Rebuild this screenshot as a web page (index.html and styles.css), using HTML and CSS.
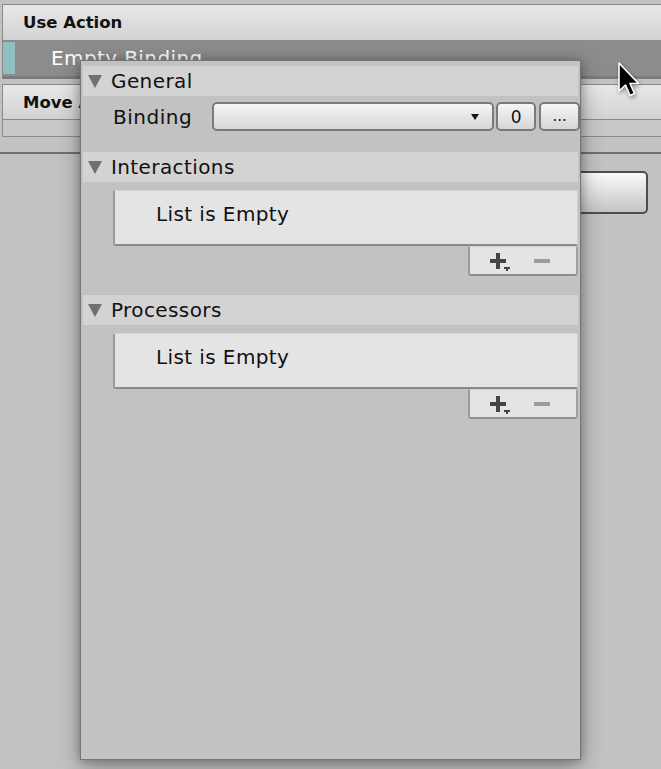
FILE: index.html
```html
<!DOCTYPE html>
<html>
<head>
<meta charset="utf-8">
<link rel="stylesheet" href="styles.css">
</head>
<body>
<div class="bg">
  <div class="alist first">
    <div class="ahead">Use Action</div>
    <div class="arow selected"><span class="strip"></span><span class="rowtext">Empty Binding</span></div>
  </div>
  <div class="alist second">
    <div class="ahead">Move Action</div>
    <div class="arow small"></div>
  </div>
  <div class="rule"></div>
  <div class="btnrow"><div class="bigbtn"></div></div>
</div>

<div class="popup">
  <div class="sect">
    <span class="tri"></span><span class="stitle">General</span>
  </div>
  <div class="binding">
    <span class="blabel">Binding</span>
    <div class="dropdown"><span class="darrow"></span></div>
    <div class="sbtn zero">0</div>
    <div class="sbtn dots">...</div>
  </div>

  <div class="sect s2">
    <span class="tri"></span><span class="stitle">Interactions</span>
  </div>
  <div class="listbox">List is Empty</div>
  <div class="footer-wrap">
    <div class="footer">
      <svg class="plus" width="22" height="20" viewBox="0 0 22 20"><rect x="0" y="6" width="16" height="4" fill="#444"/><rect x="6" y="0" width="4" height="16" fill="#444"/><rect x="14" y="14" width="6" height="2" fill="#444"/><rect x="16" y="16" width="2" height="2" fill="#444"/></svg>
      <span class="minus"></span>
    </div>
  </div>

  <div class="sect s3">
    <span class="tri"></span><span class="stitle">Processors</span>
  </div>
  <div class="listbox">List is Empty</div>
  <div class="footer-wrap">
    <div class="footer">
      <svg class="plus" width="22" height="20" viewBox="0 0 22 20"><rect x="0" y="6" width="16" height="4" fill="#444"/><rect x="6" y="0" width="4" height="16" fill="#444"/><rect x="14" y="14" width="6" height="2" fill="#444"/><rect x="16" y="16" width="2" height="2" fill="#444"/></svg>
      <span class="minus"></span>
    </div>
  </div>
</div>

<svg class="cursor" width="26" height="38" viewBox="0 0 26 38">
  <path d="M2 1 L2 29 L8.5 23 L13 33.5 L17.5 31.5 L13 21.5 L21.5 21.5 Z" fill="#000" stroke="#fff" stroke-width="1.6" stroke-linejoin="round"/>
</svg>
</body>
</html>
```

FILE: styles.css
```css
html, body {
  margin: 0;
  padding: 0;
}
body {
  background: #c2c2c2;
  width: 661px;
  height: 769px;
  overflow: hidden;
  font-family: "DejaVu Sans", "Liberation Sans", sans-serif;
  color: #111;
  position: relative;
}
.bg {
  padding-top: 4px;
}
.alist {
  margin-left: 2px;
  border-top: 1px solid #8a8a8a;
  border-left: 1px solid #8a8a8a;
}
.first {
  border-bottom: 3px solid #7c7c7c;
}
.second {
  margin-top: 5px;
  border-bottom: 1px solid #8a8a8a;
}
.ahead {
  height: 35px;
  box-sizing: border-box;
  padding-left: 20px;
  display: flex;
  align-items: center;
  font-weight: bold;
  font-size: 16.5px;
  background: linear-gradient(#e8e8e8, #d2d2d2);
}
.second .ahead {
  border-bottom: 1px solid #8a8a8a;
}
.arow {
  height: 36px;
  display: flex;
  align-items: center;
}
.arow.selected {
  background: #8c8c8c;
}
.arow.small {
  height: 16px;
  background: #c8c8c8;
}
.strip {
  align-self: stretch;
  width: 12px;
  margin: 2px 0;
  background: #90c0c4;
}
.rowtext {
  margin-left: 36px;
  color: #fff;
  font-size: 20px;
  letter-spacing: 0.4px;
}
.rule {
  margin-top: 15px;
  height: 2px;
  background: #707070;
}
.btnrow {
  display: flex;
  justify-content: flex-end;
  padding-right: 13px;
  margin-top: 17px;
}
.bigbtn {
  width: 110px;
  height: 39px;
  border: 2px solid #4e4e4e;
  border-radius: 5px;
  background: linear-gradient(#fafafa, #c4c4c4);
}

/* popup */
.popup {
  position: absolute;
  left: 80px;
  top: 60px;
  width: 501px;
  height: 700px;
  box-sizing: border-box;
  border: 1px solid #767676;
  background: #c2c2c2;
  padding: 5px 2px 0 2px;
  box-shadow: 0 6px 20px rgba(0, 0, 0, 0.35), 0 0 8px rgba(0,0,0,0.22);
}
.sect {
  height: 30px;
  background: #d3d3d3;
  display: flex;
  align-items: center;
}
.s2 {
  margin-top: 21px;
}
.s3 {
  margin-top: 19px;
}
.tri {
  width: 0;
  height: 0;
  margin-left: 5px;
  border-left: 7px solid transparent;
  border-right: 7px solid transparent;
  border-top: 13px solid #707070;
}
.stitle {
  margin-left: 9px;
  font-size: 20px;
  letter-spacing: 0.4px;
}
.binding {
  margin-top: 6px;
  margin-right: -2px;
  height: 29px;
  display: flex;
  align-items: center;
}
.blabel {
  margin-left: 30px;
  font-size: 20px;
  letter-spacing: 0.5px;
  width: 99px;
}
.dropdown, .sbtn {
  height: 29px;
  box-sizing: border-box;
  border: 2px solid #7a7a7a;
  border-radius: 5px;
  background: linear-gradient(#f6f6f6, #d6d6d6);
}
.dropdown {
  width: 284px;
  display: flex;
  align-items: center;
  justify-content: flex-end;
}
.darrow {
  width: 0;
  height: 0;
  margin-right: 13px;
  border-left: 4px solid transparent;
  border-right: 4px solid transparent;
  border-top: 6px solid #111;
}
.sbtn {
  margin-left: 2px;
  display: flex;
  align-items: center;
  justify-content: center;
  font-size: 17px;
}
.zero {
  width: 40px;
}
.dots {
  width: 41px;
  margin-left: 3px;
  font-size: 15px;
  padding-bottom: 2px;
}
.listbox {
  margin-top: 8px;
  margin-left: 30px;
  height: 56px;
  box-sizing: border-box;
  background: #e4e4e4;
  border-top: 1px solid #d6d6d6;
  border-left: 2px solid #9a9a9a;
  border-right: 1px solid #cfcfcf;
  border-bottom: 2px solid #8a8a8a;
  border-radius: 2px;
  padding-left: 41px;
  padding-bottom: 8px;
  display: flex;
  align-items: center;
  font-size: 20px;
  letter-spacing: 0.4px;
}
.footer-wrap {
  display: flex;
  justify-content: flex-end;
}
.footer {
  width: 110px;
  height: 30px;
  box-sizing: border-box;
  background: #e4e4e4;
  border-left: 2px solid #9a9a9a;
  border-right: 2px solid #a0a0a0;
  border-bottom: 2px solid #8e8e8e;
  border-top: 1px solid #d2d2d2;
  border-radius: 0 0 3px 3px;
  display: flex;
  align-items: center;
  padding-left: 20px;
}
.plus {
  margin-top: 4px;
}
.minus {
  margin-left: 22px;
  width: 16px;
  height: 4px;
  background: #9c9c9c;
}
.cursor {
  position: absolute;
  left: 617px;
  top: 62px;
  filter: drop-shadow(1px 2px 2px rgba(0,0,0,0.4));
}
```
